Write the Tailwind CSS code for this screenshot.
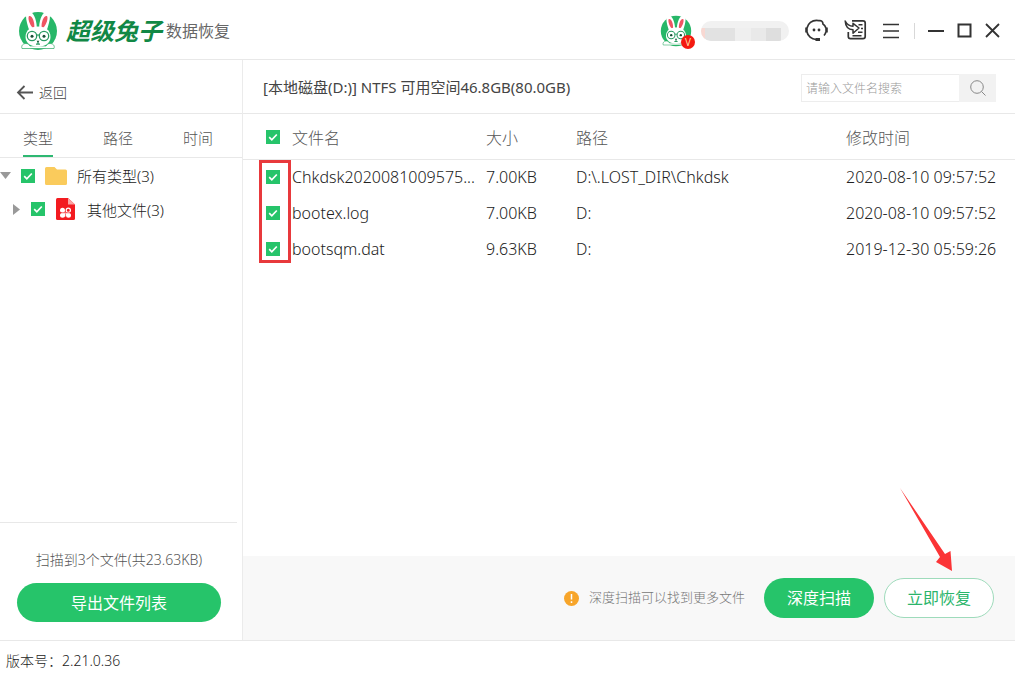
<!DOCTYPE html>
<html lang="zh-CN">
<head>
<meta charset="utf-8">
<meta name="viewport" content="width=device-width, initial-scale=1">
<title>超级兔子数据恢复</title>
<script src="https://cdn.jsdelivr.net/npm/@tailwindcss/browser@4"></script>
</head>
<body class="flex min-h-screen flex-col bg-white font-['Noto_Sans','Noto_Sans_CJK_SC',sans-serif] font-light text-[#222]">
<svg class="hidden" aria-hidden="true">
  <symbol id="rabbit" viewBox="0 0 40 40">
    <circle cx="20" cy="20" r="19" fill="#27b768"/>
    <path d="M4 37.500c-1-3 1-5 4-5 2 0 3 1 4 2.500h16c1-1.500 2-2.500 4-2.500 3 0 5 2 4 5z" fill="#fff" stroke="#2aa862" stroke-width=".7"/>
    <path d="M11.500 20C8.500 12 6.500 3 9.500 1c4.500-2.500 9 6 9.300 15h2.400C21.500 7 26-1.500 30.500 1c3 2 1 11-2 19z" fill="#fff"/>
    <path d="M14.500 16.500C11.500 13.500 9.500 7 11 5c3-1 6 6 5.300 11.500zM25.500 16.500c3-3 5-9.500 3.500-11.500-3-1-6 6-5.300 11.500z" fill="#ef5562"/>
    <path d="M7.500 26c0-7 5.500-10.500 12.500-10.500S32.500 19 32.500 26c0 6-5.500 9.800-12.500 9.800S7.500 32 7.500 26z" fill="#fff"/>
    <g fill="none" stroke="#2a9a62" stroke-width="1.300">
      <circle cx="14" cy="25" r="4.700"/><circle cx="26" cy="25" r="4.700"/>
      <path d="M18.700 24.200q1.300-.8 2.600 0M20 30v3.200M18 33.200h4"/>
    </g>
    <circle cx="14" cy="25.200" r="1.500" fill="#174f35"/><circle cx="26" cy="25.200" r="1.500" fill="#174f35"/>
    <path d="M18.600 29.800h2.800L20 31.500z" fill="#174f35"/>
  </symbol>
  <symbol id="tick" viewBox="0 0 14 14"><path d="M3.200 7.200l2.600 2.600 5-5.300" fill="none" stroke="#fff" stroke-width="1.700"/></symbol>
</svg>

<header class="flex h-[60px] shrink-0 items-center border-b border-[#e8e8e8] pt-[2px] pr-[15px] pl-[18px]">
  <svg class="size-10 shrink-0"><use href="#rabbit"/></svg>
  <h1 class="flex items-center gap-1 pl-2 whitespace-nowrap">
    <span class="text-2xl leading-8 font-bold text-[#118845] italic">超级兔子</span>
    <span class="text-base font-normal text-[#666]">数据恢复</span>
  </h1>
  <div class="ml-auto flex items-center">
    <div class="relative mr-[9px] h-8 w-8 shrink-0">
      <svg class="size-8"><use href="#rabbit"/></svg>
      <span class="absolute top-5 left-[21px] grid size-[14px] place-items-center rounded-full bg-[#f41a10] text-[10px] leading-none font-normal text-[#ffd9a0]">V</span>
    </div>
    <div class="mr-[16px] h-5 w-[88px] overflow-hidden rounded-full bg-[#f1f1f1]" aria-hidden="true">
      <div class="mt-[7px] flex h-[13px]"><i class="w-1 bg-[#f8d8d2]"></i><i class="w-[30px] bg-[#e2e2e2]"></i><i class="w-[16px] bg-[#efefef]"></i><i class="w-[15px] bg-[#e9e9e9]"></i><i class="w-[15px] bg-[#dedede]"></i></div>
    </div>
    <button class="mr-4 size-[23px]" aria-label="客服">
      <svg class="size-[23px]" viewBox="0 0 23 23" fill="none" stroke="#333" stroke-width="1.700"><path d="M2 9C3 4.500 7 1.300 11.500 1.300c1 0 2 .1 2.800.5M13.500 1.800c2.500-.8 4.500.5 4.500 3.200 1.500 1 2.500 2.500 2.900 4M2 13c.8 4 4.500 7.200 9 7.500M20.900 13c-.4 1.500-1 2.500-1.900 3.500"/><path d="M1.500 8.500v5M21.500 8.500v5" stroke-width="2.600"/><path d="M10.500 20.500H15" stroke-width="3"/><circle cx="9" cy="11" r="1.400" fill="#333" stroke="none"/><circle cx="14" cy="11" r="1.400" fill="#333" stroke="none"/></svg>
    </button>
    <button class="mr-4 size-[23px]" aria-label="导入">
      <svg class="size-[23px]" viewBox="0 0 23 23" fill="none" stroke="#333" stroke-width="1.700"><path d="M8 1.800h11q2.200 0 2.200 2.200v13.500q0 2.200-2.200 2.200H6.500q-2.200 0-2.200-2.200V13"/><path d="M1.200 2c.3 6 3 8.500 7.800 8.700v3.500l6-5.200-6-4.700v2.900C5.500 7.200 3 5.500 1.200 2z" fill="#fff" stroke-width="1.500" stroke-linejoin="round"/><path d="M14.500 5.700h4M17 9.500h2M14 13.300h4.500M8.500 16.700h9" stroke-width="1.400"/></svg>
    </button>
    <button class="mr-[15px] h-4 w-4" aria-label="菜单"><svg class="h-4 w-4" viewBox="0 0 16 16" stroke="#333" stroke-width="1.600"><path d="M0 1.500h16M0 8h16M0 14.500h16"/></svg></button>
    <i class="mr-[13px] h-4 w-px bg-[#d8d8d8]"></i>
    <button class="mr-[13px] size-4" aria-label="最小化"><svg class="size-4" viewBox="0 0 16 16"><path d="M0 8h16" stroke="#333" stroke-width="2"/></svg></button>
    <button class="mr-[13px] size-[15px]" aria-label="最大化"><svg class="size-[15px]" viewBox="0 0 15 15"><path d="M1.500 1.500h12v12h-12z" fill="none" stroke="#333" stroke-width="2"/></svg></button>
    <button class="size-[15px]" aria-label="关闭"><svg class="size-[15px]" viewBox="0 0 15 15"><path d="M1 1l13 13M14 1L1 14" stroke="#333" stroke-width="1.800"/></svg></button>
  </div>
</header>

<div class="flex flex-1">
  <aside class="flex w-[243px] shrink-0 flex-col border-r border-[#ebebeb]">
    <div class="flex h-[54px] items-center border-b border-[#e8e8e8] pt-3 pl-4">
      <a href="#" class="flex items-center gap-[5px] text-sm text-[#444]">
        <svg class="h-4 w-[18px]" viewBox="0 0 18 16" fill="none" stroke="#555" stroke-width="1.800"><path d="M17 7.500H2M8.500 1L2 7.500 8.500 14"/></svg>返回
      </a>
    </div>
    <nav class="flex h-11 gap-[50px] border-b border-[#e8e8e8] pl-[23px] text-[15px] text-[#555]">
      <a href="#" class="flex items-center border-b-2 border-[#2eb872] pt-2">类型</a>
      <a href="#" class="flex items-center border-b-2 border-transparent pt-2">路径</a>
      <a href="#" class="flex items-center border-b-2 border-transparent pt-2">时间</a>
    </nav>
    <ul class="flex-1 text-[15px]">
      <li class="flex h-[35px] items-center">
        <svg class="mr-[10px] h-[10px] w-[11px]" viewBox="0 0 11 10"><path d="M0 1h11L5.500 8z" fill="#999"/></svg>
        <label class="flex items-center">
          <span class="grid size-[14px] place-items-center"><input type="checkbox" checked class="col-start-1 row-start-1 size-[14px] appearance-none bg-[#26c46a]"><svg class="pointer-events-none col-start-1 row-start-1 size-[14px]"><use href="#tick"/></svg></span>
          <svg class="mr-[10px] ml-[10px] h-[18px] w-[22px]" viewBox="0 0 22 18"><path d="M0 1.500Q0 0 1.500 0h8L12 2.500h8.500Q22 2.500 22 4v12.500q0 1.500-1.500 1.500h-19Q0 18 0 16.500z" fill="#facb5c"/></svg>
          <span class="pt-[2px]">所有类型(3)</span>
        </label>
      </li>
      <li class="flex h-8 items-center pl-3">
        <svg class="mr-[9px] h-[11px] w-[10px]" viewBox="0 0 10 11"><path d="M1 0v11l7-5.500z" fill="#999"/></svg>
        <label class="flex items-center">
          <span class="grid size-[14px] place-items-center"><input type="checkbox" checked class="col-start-1 row-start-1 size-[14px] appearance-none bg-[#26c46a]"><svg class="pointer-events-none col-start-1 row-start-1 size-[14px]"><use href="#tick"/></svg></span>
          <svg class="mr-3 ml-[11px] h-[22px] w-[19px]" viewBox="0 0 19 22"><path d="M1.500 0H12l7 6.500V20.500q0 1.500-1.500 1.500h-16Q0 22 0 20.500v-19Q0 0 1.500 0z" fill="#f31b20"/><path d="M12 0l7 6.500h-7z" fill="#fba4a4"/><g fill="#fff"><circle cx="6.500" cy="12.300" r="2.500"/><circle cx="6.500" cy="17.200" r="2.500"/><circle cx="12.500" cy="17.200" r="2.500"/><path d="M6 14.500h4v4H6zM9.500 14.700h3v3h-3z"/></g><circle cx="12.300" cy="12.200" r="2.100" fill="none" stroke="#fff" stroke-width="1.200"/><path d="M9.500 15.500v4M4 14.800h11" stroke="#f31b20" stroke-width=".6"/></svg>
          <span class="pt-[2px]">其他文件(3)</span>
        </label>
      </li>
    </ul>
    <div class="mr-[5px] border-t border-[#e8e8e8] pt-[27px] pb-[18px] pl-[17px] text-center">
      <p class="pr-4 text-sm leading-5 text-[#555]">扫描到3个文件(共23.63KB)</p>
      <div class="pt-[13px] pr-4"><button class="h-[39px] w-full rounded-full bg-[#26c46a] text-base font-normal text-white">导出文件列表</button></div>
    </div>
  </aside>

  <main class="flex min-w-0 flex-1 flex-col">
    <div class="flex h-[54px] shrink-0 items-center justify-between border-b border-[#e8e8e8] pt-[2px] pr-[19px] pl-5">
      <h2 class="text-[15px] font-normal whitespace-nowrap text-[#444]">[本地磁盘(D:)] NTFS 可用空间46.8GB(80.0GB)</h2>
      <form class="flex h-7">
        <input type="search" aria-label="搜索" placeholder="请输入文件名搜索" class="w-[158px] border border-r-0 border-[#ededed] px-1 pt-[2px] text-xs outline-none placeholder:text-[#999]">
        <button type="button" aria-label="搜索" class="grid w-[37px] place-items-center bg-[#f2f2f2]"><svg class="size-4" viewBox="0 0 16 16" fill="none" stroke="#888" stroke-width="1"><circle cx="7" cy="7" r="6.300"/><path d="M11.500 11.500l4 4"/></svg></button>
      </form>
    </div>
    <div class="relative flex-1">
      <table class="w-full table-fixed border-collapse text-left text-base whitespace-nowrap">
        <colgroup><col class="w-[49px]"><col class="w-[194px]"><col class="w-[90px]"><col><col class="w-[169px]"></colgroup>
        <thead class="border-b border-[#e8e8e8] text-[#555]">
          <tr class="h-[45px]">
            <th class="pt-px pl-[23px]"><span class="grid size-[14px] place-items-center"><input type="checkbox" checked aria-label="全选" class="col-start-1 row-start-1 size-[14px] appearance-none bg-[#26c46a]"><svg class="pointer-events-none col-start-1 row-start-1 size-[14px]"><use href="#tick"/></svg></span></th>
            <th class="pt-[3px] font-light">文件名</th><th class="pt-[3px] font-light">大小</th><th class="pt-[3px] font-light">路径</th><th class="pt-[3px] font-light">修改时间</th>
          </tr>
        </thead>
        <tbody>
          <tr class="h-9">
            <td class="pl-[23px]"><span class="grid size-[14px] place-items-center"><input type="checkbox" checked aria-label="Chkdsk2020081009575..." class="col-start-1 row-start-1 size-[14px] appearance-none bg-[#26c46a]"><svg class="pointer-events-none col-start-1 row-start-1 size-[14px]"><use href="#tick"/></svg></span></td>
            <td>Chkdsk2020081009575...</td><td>7.00KB</td><td>D:\.LOST_DIR\Chkdsk</td><td>2020-08-10 09:57:52</td>
          </tr>
          <tr class="h-9">
            <td class="pl-[23px]"><span class="grid size-[14px] place-items-center"><input type="checkbox" checked aria-label="bootex.log" class="col-start-1 row-start-1 size-[14px] appearance-none bg-[#26c46a]"><svg class="pointer-events-none col-start-1 row-start-1 size-[14px]"><use href="#tick"/></svg></span></td>
            <td>bootex.log</td><td>7.00KB</td><td>D:</td><td>2020-08-10 09:57:52</td>
          </tr>
          <tr class="h-9">
            <td class="pl-[23px]"><span class="grid size-[14px] place-items-center"><input type="checkbox" checked aria-label="bootsqm.dat" class="col-start-1 row-start-1 size-[14px] appearance-none bg-[#26c46a]"><svg class="pointer-events-none col-start-1 row-start-1 size-[14px]"><use href="#tick"/></svg></span></td>
            <td>bootsqm.dat</td><td>9.63KB</td><td>D:</td><td>2019-12-30 05:59:26</td>
          </tr>
        </tbody>
      </table>
      <div class="pointer-events-none absolute top-[46px] left-4 h-[103px] w-8 border-3 border-[#e8393c]"></div>
    </div>
    <div class="relative flex h-[84px] shrink-0 items-center justify-end bg-[#f8f8f8] pr-[21px]">
      <svg class="mr-[10px] size-[15px]" viewBox="0 0 15 15"><circle cx="7.500" cy="7.500" r="7.500" fill="#f7a52a"/><path d="M7.500 3v5.500M7.500 10.300v1.700" stroke="#fff" stroke-width="1.500"/></svg>
      <p class="mr-[19px] text-[13px] text-[#777]">深度扫描可以找到更多文件</p>
      <button class="mr-[10px] h-10 w-[110px] rounded-full bg-[#26c46a] text-base font-normal text-white">深度扫描</button>
      <button class="h-10 w-[110px] rounded-full border border-[#9edbbb] bg-white text-base font-normal text-[#2bb56b]">立即恢复</button>
      <svg class="pointer-events-none absolute -top-[69px] right-[60px] h-[86px] w-[56px]" viewBox="0 0 56 86"><path d="M1 1L46 67 51.500 64 53 84 37 75 41 70z" fill="#fb3436"/></svg>
    </div>
  </main>
</div>

<footer class="flex h-[33px] shrink-0 items-center border-t border-[#e8e8e8] pt-2 pl-[6px] text-sm">版本号：2.21.0.36</footer>
</body>
</html>
